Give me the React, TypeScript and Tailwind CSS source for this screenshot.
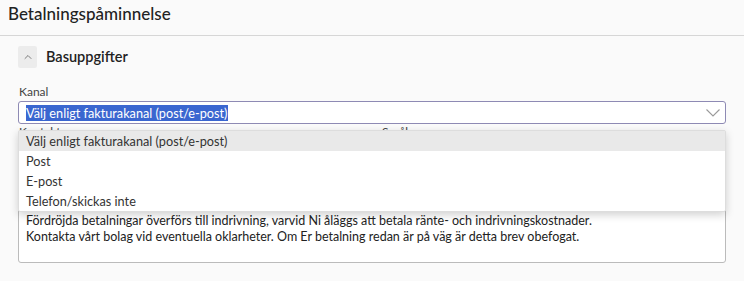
import { ChevronUp } from "lucide-react"

const options = ["Välj enligt fakturakanal (post/e-post)", "Post", "E-post", "Telefon/skickas inte"]

export default function App() {
  return (
    <div className="min-h-screen bg-[#fafafa] text-[#222] font-['Lato',sans-serif] overflow-hidden">
      {/* Page title */}
      <div className="h-[36px] border-b border-[#d6d6d6] px-2 pt-[3px]">
        <h1 className="text-[17px] leading-[22px] font-medium">Betalningspåminnelse</h1>
      </div>

      <div className="px-[18px] pt-[10px]">
        {/* Section header */}
        <div className="flex items-center gap-[9px] h-[22px]">
          <button className="w-[19px] h-[22px] bg-[#ececec] rounded-[2px] flex items-center justify-center">
            <ChevronUp className="w-[12px] h-[12px] text-[#555]" strokeWidth={1.5} />
          </button>
          <h2 className="text-[14.5px] font-semibold">Basuppgifter</h2>
        </div>

        {/* Kanal */}
        <div className="mt-[16px] relative">
          <label className="block text-[12px] leading-[16px] text-[#444] pl-px">Kanal</label>
          <div className="mt-[1px] h-[23px] bg-white border border-[#8e8ab4] rounded-[3px] flex items-center pl-[7px] pr-[5px]">
            <span className="text-[12.7px] leading-[16px] bg-[#3a66d0] text-white">{options[0]}</span>
            <svg className="ml-auto" width="14" height="8" viewBox="0 0 14 8" fill="none">
              <path d="M0.5 0.5 L7 7 L13.5 0.5" stroke="#9a9a9a" strokeWidth="1.1" />
            </svg>
          </div>

          {/* Open list */}
          <ul className="absolute left-0 right-0 top-[46px] z-10 bg-white border border-[#ddd] rounded-[2px] shadow-[0_3px_8px_rgba(0,0,0,0.18)]">
            {options.map((o, i) => (
              <li
                key={o}
                className={`h-[20px] leading-[20px] pl-[7px] text-[12.7px] text-[#333] ${i === 0 ? "bg-[#e9e9e9]" : ""}`}
              >
                {o}
              </li>
            ))}
          </ul>
        </div>

        {/* Fields under the list */}
        <div className="grid grid-cols-2 gap-4 mt-[1px] text-[12px] leading-[14px] text-[#444]">
          <span className="pl-px">Kontaktperson</span>
          <span className="pl-[2px]">Språk</span>
        </div>

        <div className="mt-[6px] bg-white border border-[#bbb] rounded-[3px] pl-[7px] pt-[3px] pb-[17px] text-[12.5px] leading-[16px] text-[#222]">
          <p>Enligt våra noteringar har vi ännu inte erhållit betalning för nedanstående faktura.</p>
          <p>Vi ber Er därför att snarast betala det förfallna beloppet.</p>
          <p>&nbsp;</p>
          <p>Om betalning inte sker inom angiven tid kommer ärendet att hanteras vidare enligt gällande rutiner.</p>
          <p>Fördröjda betalningar överförs till indrivning, varvid Ni åläggs att betala ränte- och indrivningskostnader.</p>
          <p>Kontakta vårt bolag vid eventuella oklarheter. Om Er betalning redan är på väg är detta brev obefogat.</p>
        </div>
      </div>
    </div>
  )
}
